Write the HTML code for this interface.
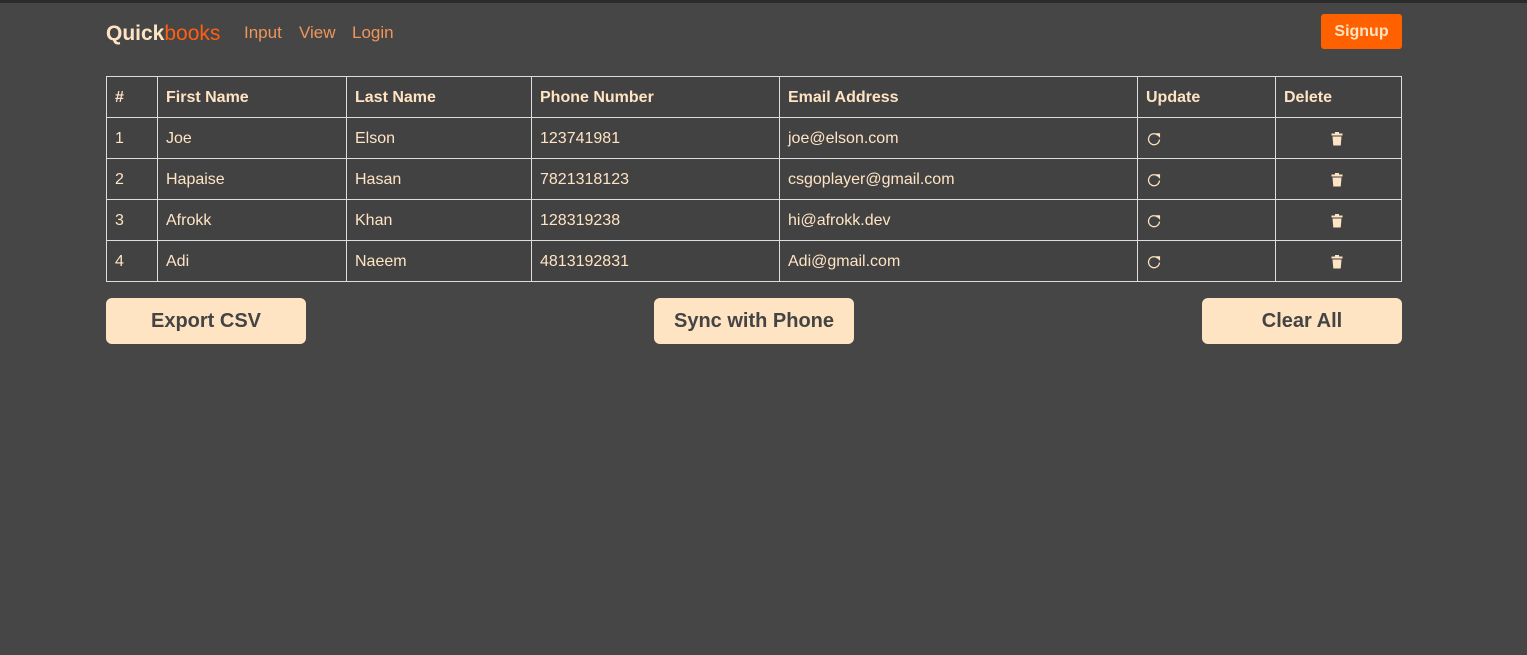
<!DOCTYPE html>
<html><head><style>
body{margin:0;background:#464646;font-family:"Liberation Sans",sans-serif;width:1527px;height:655px;overflow:hidden;position:relative;border-top:3px solid #2b2b2b;box-sizing:border-box}
.logo{position:absolute;left:106px;top:19px;font-size:21px;font-weight:bold;color:#ffe4c4}
.logo span{color:#ff5e14;font-weight:normal}
.link{position:absolute;top:20px;font-size:17px;color:#f0955a}
.signup{position:absolute;left:1321px;top:11px;width:81px;height:35px;background:#ff6000;border-radius:3px;color:#ffe4c4;font-weight:bold;font-size:16px;text-align:center;line-height:35px}
table{position:absolute;left:106px;top:73px;border-collapse:collapse;background:#424242;color:#ffe4c4;font-size:16px}
td,th{border:1px solid #ddd;height:41px;padding:2px 0 0 8px;text-align:left;box-sizing:border-box}
th{font-weight:bold}
.btn{position:absolute;top:295px;width:200px;height:46px;background:#ffe4c4;border-radius:6px;color:#444;font-weight:bold;font-size:20px;text-align:center;line-height:47px}
</style></head><body>
<div class="logo">Quick<span>books</span></div>
<div class="link" style="left:244px">Input</div>
<div class="link" style="left:299px">View</div>
<div class="link" style="left:352px">Login</div>
<div class="signup">Signup</div>
<table>
<colgroup><col style="width:51px"><col style="width:189px"><col style="width:185px"><col style="width:248px"><col style="width:358px"><col style="width:138px"><col style="width:126px"></colgroup>
<tr><th>#</th><th>First Name</th><th>Last Name</th><th>Phone Number</th><th>Email Address</th><th>Update</th><th>Delete</th></tr>
<tr><td>1</td><td>Joe</td><td>Elson</td><td>123741981</td><td>joe@elson.com</td><td>R</td><td>D</td></tr>
<tr><td>2</td><td>Hapaise</td><td>Hasan</td><td>7821318123</td><td>csgoplayer@gmail.com</td><td>R</td><td>D</td></tr>
<tr><td>3</td><td>Afrokk</td><td>Khan</td><td>128319238</td><td>hi@afrokk.dev</td><td>R</td><td>D</td></tr>
<tr><td>4</td><td>Adi</td><td>Naeem</td><td>4813192831</td><td>Adi@gmail.com</td><td>R</td><td>D</td></tr>
</table>
<div class="btn" style="left:106px">Export CSV</div>
<div class="btn" style="left:654px">Sync with Phone</div>
<div class="btn" style="left:1202px">Clear All</div>
<script>
document.querySelectorAll('td').forEach(function(td){
if(td.textContent==='R'){td.innerHTML='<svg width="16" height="16" viewBox="0 0 14 14" style="vertical-align:middle"><path d="M11.8 7.5A4.8 4.8 0 1 1 10.2 3.6" fill="none" stroke="#ffe4c4" stroke-width="1.1"/><path d="M8.2 2L12.3 2 12.3 6z" fill="#ffe4c4"/></svg>';}
if(td.textContent==='D'){td.style.paddingLeft='55px';td.innerHTML='<svg width="12" height="14" viewBox="0 0 12 14" style="vertical-align:middle"><rect x="0.5" y="1.5" width="11" height="2" fill="#ffe4c4"/><rect x="4" y="0" width="4" height="2" fill="#ffe4c4"/><path d="M1.5 4.5h9l-0.8 9h-7.4z" fill="#ffe4c4"/></svg>';}
});
</script>
</body></html>
